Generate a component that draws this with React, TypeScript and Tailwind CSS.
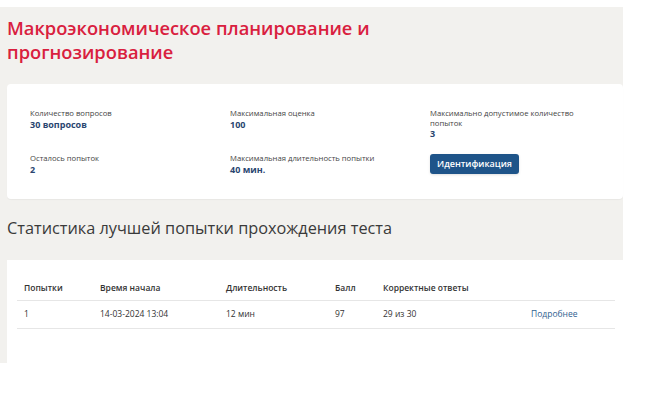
import React from 'react';

const stats = [
    { label: 'Количество вопросов', value: '30 вопросов' },
    { label: 'Максимальная оценка', value: '100' },
    { label: 'Максимально допустимое количество попыток', value: '3' },
    { label: 'Осталось попыток', value: '2' },
    { label: 'Максимальная длительность попытки', value: '40 мин.' },
];

function App() {
    return (
        <div className="h-[402px] w-[672px] bg-white font-['Open_Sans',sans-serif] pt-[7px]">
            <div className="w-[623px] h-[356px] bg-[#f2f1ee] pl-[7px] flex flex-col">
                {/* заголовок курса */}
                <h1 className="h-[77px] pt-[9px] text-[18.3px] leading-[24px] font-semibold text-[#d9203e]">
                    Макроэкономическое планирование и
                    <br />
                    прогнозирование
                </h1>

                {/* карточка с параметрами теста */}
                <div className="h-[115px] bg-white rounded-sm shadow-[0_1px_1px_rgba(0,0,0,0.04)] pt-[25px] pl-[23px] grid grid-cols-[200px_200px_170px] grid-rows-[44px_auto] text-[7.7px] leading-[10px]">
                    {stats.slice(0, 3).map((s) => (
                        <div key={s.label}>
                            <div className="text-[#444] w-[150px] leading-[9.5px]">{s.label}</div>
                            <div className="text-[#2a4670] font-bold text-[9px] leading-[11px]">{s.value}</div>
                        </div>
                    ))}
                    {stats.slice(3).map((s) => (
                        <div key={s.label} className="pt-[1px]">
                            <div className="text-[#444] leading-[9.5px]">{s.label}</div>
                            <div className="text-[#2a4670] font-bold text-[9px] leading-[11px]">{s.value}</div>
                        </div>
                    ))}
                    <div>
                        <button className="w-[89px] h-[20px] rounded-[3px] bg-[#1e5489] text-white font-semibold text-[9px] leading-[10px] mt-[1px] shadow-sm">
                            Идентификация
                        </button>
                    </div>
                </div>

                <h2 className="h-[61px] flex items-center pb-[2px] text-[16.3px] text-[#3a3a3a] font-normal">
                    Статистика лучшей попытки прохождения теста
                </h2>

                {/* таблица результатов */}
                <div className="flex-1 bg-white pl-[10px] pr-[8px] pt-[18px]">
                    <table className="w-full table-fixed border-collapse text-[8.5px] text-[#333]">
                        <colgroup>
                            <col className="w-[76px]" />
                            <col className="w-[126px]" />
                            <col className="w-[109px]" />
                            <col className="w-[48px]" />
                            <col className="w-[148px]" />
                            <col />
                        </colgroup>
                        <thead>
                            <tr className="h-[22px] border-b border-[#e6e6e6] text-left">
                                <th className="px-[7px] font-semibold">Попытки</th>
                                <th className="px-[7px] font-semibold">Время начала</th>
                                <th className="px-[7px] font-semibold">Длительность</th>
                                <th className="px-[7px] font-semibold">Балл</th>
                                <th className="px-[7px] font-semibold">Корректные ответы</th>
                                <th className="px-[7px]"></th>
                            </tr>
                        </thead>
                        <tbody>
                            <tr className="h-[28px] border-b border-[#e6e6e6]">
                                <td className="px-[7px]">1</td>
                                <td className="px-[7px]">14-03-2024 13:04</td>
                                <td className="px-[7px]">12 мин</td>
                                <td className="px-[7px]">97</td>
                                <td className="px-[7px]">29 из 30</td>
                                <td className="px-[7px] text-[#2f5f91]">Подробнее</td>
                            </tr>
                        </tbody>
                    </table>
                </div>
            </div>
        </div>
    );
}

export default App;
